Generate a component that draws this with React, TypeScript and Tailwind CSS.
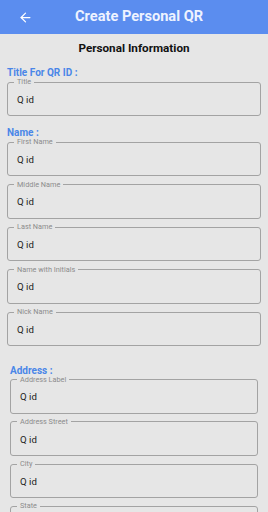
import { ArrowLeft } from 'lucide-react';

type FieldProps = {
  label: string;
  value: string;
  className?: string;
};

const Field = ({ label, value, className }: FieldProps) => (
  <fieldset
    className={`h-[38px] rounded-[3px] border border-[#a3a3a3] px-[6px] ${className ?? ''}`}
  >
    <legend className="px-[3px] text-[7.3px] leading-[8px] text-[#8c8c8c]">
      {label}
    </legend>
    <div className="flex h-[28px] items-center pl-[3px] text-[9.7px] text-[#222]">
      {value}
    </div>
  </fieldset>
);

const SectionLabel = ({
  children,
  className,
}: {
  children: string;
  className?: string;
}) => (
  <div
    className={`text-[10px] font-bold leading-[11px] text-[#4a86e8] ${className ?? ''}`}
  >
    {children}
  </div>
);

const nameFields = [
  'First Name',
  'Middle Name',
  'Last Name',
  'Name with Initials',
  'Nick Name',
];

const addressFields = ['Address Label', 'Address Street', 'City', 'State'];

export default function App() {
  return (
    <div
      className="h-[512px] w-[268px] overflow-hidden bg-[#e6e6e6]"
      style={{ fontFamily: 'Roboto, "Noto Sans", sans-serif' }}
    >
      <header className="flex h-[34px] items-center bg-[#5b8def] pl-[18px]">
        <ArrowLeft size={15} strokeWidth={2} className="text-white" />
        <h1 className="ml-[42px] text-[14.6px] font-bold text-[#eef3ff]">
          Create Personal QR
        </h1>
      </header>

      <div className="flex h-[30px] items-center justify-center text-[11.7px] font-bold text-[#111]">
        Personal Information
      </div>

      <div className="px-[7px]">
        <SectionLabel className="mt-[3px]">Title For QR ID :</SectionLabel>
        <Field label="Title" value="Q id" />

        <SectionLabel className="mt-[11px]">Name :</SectionLabel>
        <div className="flex flex-col gap-[4.5px]">
          {nameFields.map((f) => (
            <Field key={f} label={f} value="Q id" />
          ))}
        </div>
      </div>

      <div className="mt-[18.5px] px-[10px]">
        <SectionLabel>Address :</SectionLabel>
        <div className="flex flex-col gap-[4.3px]">
          {addressFields.map((f) => (
            <Field key={f} label={f} value="Q id" />
          ))}
        </div>
      </div>
    </div>
  );
}
